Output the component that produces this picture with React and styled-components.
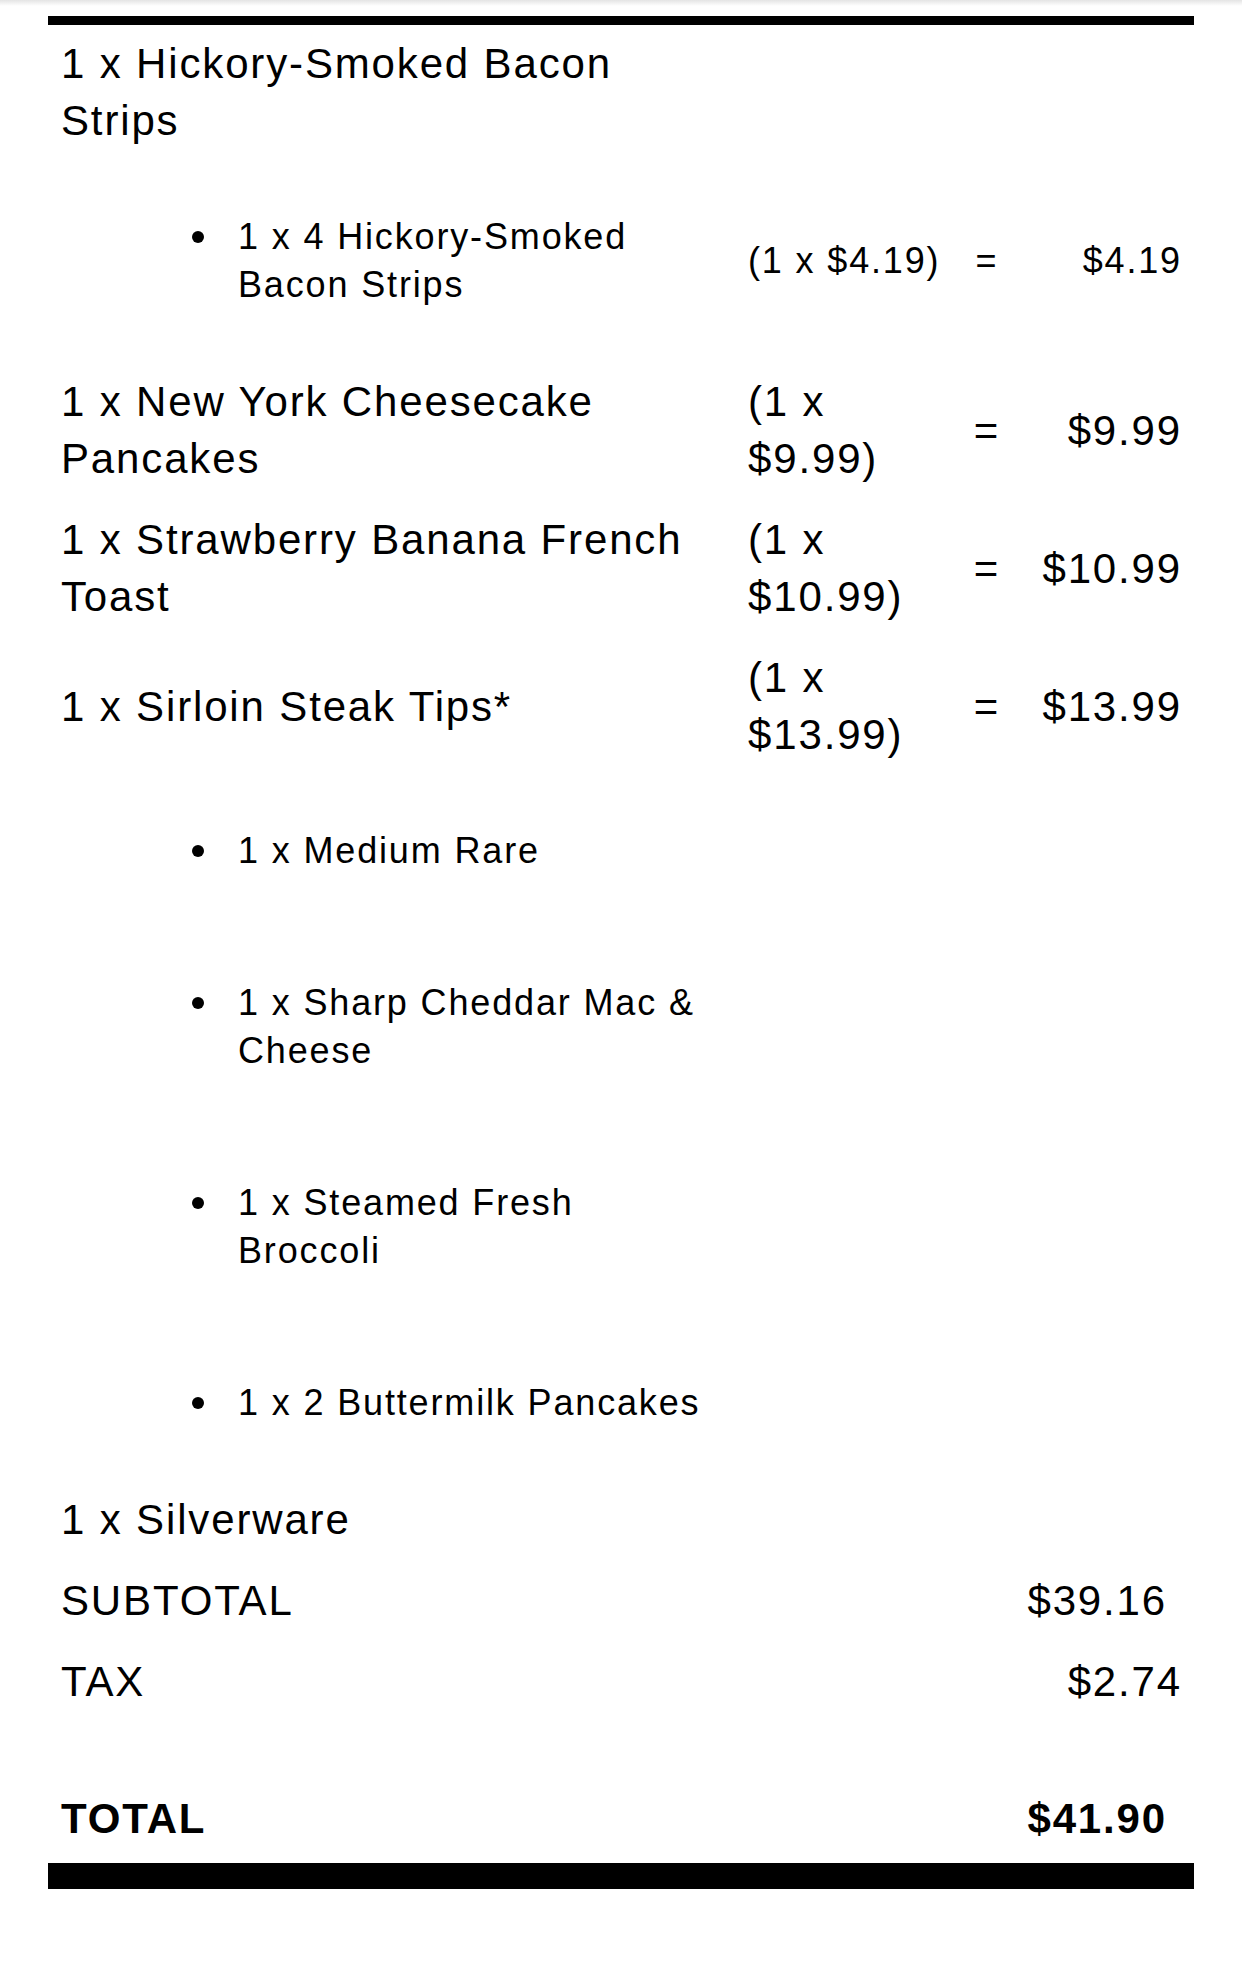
import React from "react";
import styled, { createGlobalStyle } from "styled-components";

const GlobalStyle = createGlobalStyle`
    html, body {
        margin: 0;
        padding: 0;
        background: #ffffff;
    }
    body {
        font-family: "Liberation Sans", Arial, Helvetica, sans-serif;
        color: #000000;
        letter-spacing: 1.85px;
    }
`;

const Page = styled.div`
    width: 1242px;
    min-height: 1968px;
    background: #ffffff;
    box-sizing: border-box;
`;

const TopShade = styled.div`
    height: 6px;
    background: linear-gradient(#e4e4e4, #ffffff);
`;

const Receipt = styled.div`
    margin: 10px 48px 0 48px;
`;

const Rule = styled.div`
    height: ${(p) => p.$size}px;
    background: #000000;
`;

const ItemRow = styled.div`
    display: grid;
    grid-template-columns: minmax(0, 1fr) 210px 58px 166px;
    align-items: center;
    padding: ${(p) => (p.$sub ? "52px" : "12px")} 12px ${(p) => (p.$sub ? "52px" : "12px")} 13px;
    font-size: ${(p) => (p.$sub ? 36 : 42)}px;
    line-height: ${(p) => (p.$sub ? 48 : 57)}px;

    ${Rule} + & {
        padding-top: 10px;
    }
`;

const Name = styled.div`
    padding-right: 30px;
`;

const SubName = styled.div`
    display: flex;
    align-items: flex-start;
    padding-left: 131px;
    padding-right: 30px;
`;

const Bullet = styled.span`
    flex: none;
    width: 12px;
    height: 12px;
    margin-top: 18px;
    margin-right: 34px;
    border-radius: 50%;
    background: #000000;
`;

const Breakdown = styled.div`
    text-align: left;
`;

const Equals = styled.div`
    text-align: center;
`;

const Amount = styled.div`
    text-align: right;
`;

const TotalRow = styled.div`
    display: flex;
    justify-content: space-between;
    align-items: center;
    padding: 12px ${(p) => p.$right}px 12px 13px;
    font-size: 42px;
    line-height: 57px;
    font-weight: ${(p) => (p.$bold ? 700 : 400)};
`;

const Spacer = styled.div`
    height: ${(p) => p.$h}px;
`;

const items = [
    { name: "1 x Hickory-Smoked Bacon Strips" },
    { name: "1 x 4 Hickory-Smoked Bacon Strips", sub: true, each: "(1 x $4.19)", total: "$4.19" },
    { name: "1 x New York Cheesecake Pancakes", each: "(1 x $9.99)", total: "$9.99" },
    { name: "1 x Strawberry Banana French Toast", each: "(1 x $10.99)", total: "$10.99" },
    { name: "1 x Sirloin Steak Tips*", each: "(1 x $13.99)", total: "$13.99" },
    { name: "1 x Medium Rare", sub: true },
    { name: "1 x Sharp Cheddar Mac & Cheese", sub: true },
    { name: "1 x Steamed Fresh Broccoli", sub: true },
    { name: "1 x 2 Buttermilk Pancakes", sub: true },
    { name: "1 x Silverware" },
];

const Item = ({ name, sub, each, total }) => (
    <ItemRow $sub={sub}>
        {sub ? (
            <SubName>
                <Bullet />
                <span>{name}</span>
            </SubName>
        ) : (
            <Name>{name}</Name>
        )}
        <Breakdown>{each}</Breakdown>
        <Equals>{each ? "=" : ""}</Equals>
        <Amount>{total}</Amount>
    </ItemRow>
);

const App = () => {
    return (
        <Page>
            <GlobalStyle />
            <TopShade />
            <Receipt>
                <Rule $size={9} />
                {items.map((it, i) => (
                    <Item key={i} {...it} />
                ))}
                <TotalRow $right={27}>
                    <span>SUBTOTAL</span>
                    <span>$39.16</span>
                </TotalRow>
                <TotalRow $right={12}>
                    <span>TAX</span>
                    <span>$2.74</span>
                </TotalRow>
                <Spacer $h={56} />
                <TotalRow $right={27} $bold>
                    <span>TOTAL</span>
                    <span>$41.90</span>
                </TotalRow>
                <Spacer $h={4} />
                <Rule $size={26} />
            </Receipt>
        </Page>
    );
};

export default App;
